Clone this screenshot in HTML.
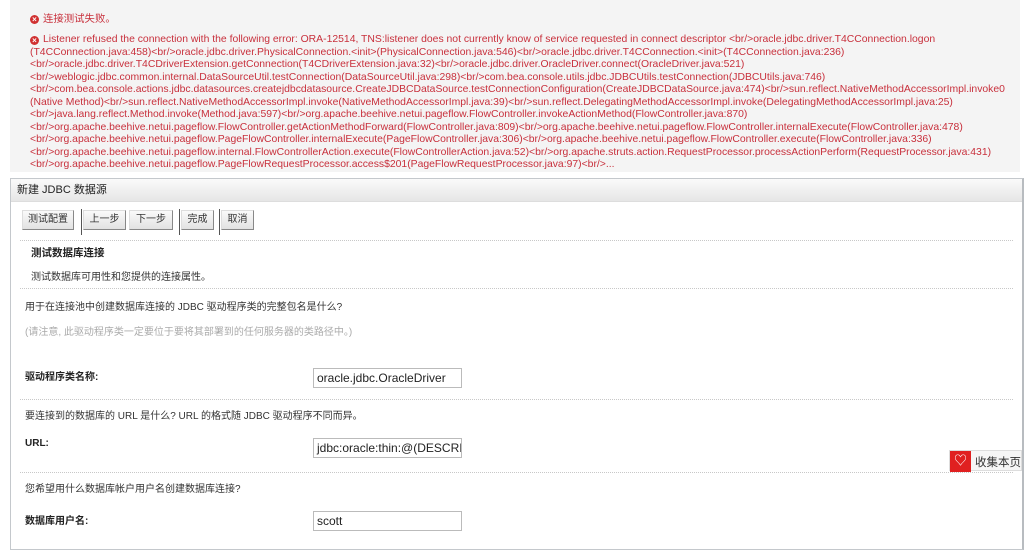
<!DOCTYPE html>
<html><head><meta charset="utf-8"><style>
body{margin:0;width:1024px;height:538px;background:#fff;position:relative;overflow:hidden;font-family:"Liberation Sans","Noto Sans CJK SC",sans-serif;}
.err{position:absolute;left:10px;top:0;width:1010px;height:172px;background:#f4f4f4;}
.e{position:absolute;left:30px;color:#c8303c;font-size:10.4px;white-space:nowrap;line-height:12px;}
.ic{position:absolute;left:30px;width:9px;height:9px;border-radius:50%;background:#d03030;color:#fff;font-size:8px;line-height:9px;text-align:center;font-weight:bold;}
.panel{position:absolute;left:10px;top:178px;width:1011px;height:370px;border:1px solid #c4c8cc;border-right:2px solid #b8bcc0;background:#fff;}
.hd{height:22px;background:linear-gradient(#fafafa,#e6e6e6);border-bottom:1px solid #ddd;font-size:11px;color:#222;line-height:22px;padding-left:6px;}
.b{position:absolute;top:210px;height:18px;border:1px solid #999;border-color:#ddd #888 #888 #ddd;background:linear-gradient(#fafafa,#e2e2e2);font-size:10px;line-height:18px;text-align:center;color:#333;}
.vl{position:absolute;top:209px;width:1px;height:26px;background:#555;}
.d{position:absolute;left:20px;width:993px;border-top:1px dotted #c8c8c8;}
.t{position:absolute;font-size:10px;color:#333;white-space:nowrap;}
.bold{font-weight:bold;color:#222;}
.in{position:absolute;left:313px;width:144px;height:18px;border:1px solid #bbb;font-size:12px;line-height:18px;padding-left:3px;color:#222;overflow:hidden;white-space:nowrap;box-sizing:content-box;}
</style></head><body>
<div class="err"></div>
<div class="ic" style="top:15px">×</div>
<div class="e" style="left:43px;top:14px">连接测试失败。</div>
<div class="ic" style="top:36px">×</div>
<div class="e" style="left:43px;top:34px">Listener refused the connection with the following error: ORA-12514, TNS:listener does not currently know of service requested in connect descriptor &lt;br/&gt;oracle.jdbc.driver.T4CConnection.logon</div>
<div class="e" style="top:47px">(T4CConnection.java:458)&lt;br/&gt;oracle.jdbc.driver.PhysicalConnection.&lt;init&gt;(PhysicalConnection.java:546)&lt;br/&gt;oracle.jdbc.driver.T4CConnection.&lt;init&gt;(T4CConnection.java:236)</div>
<div class="e" style="top:59px">&lt;br/&gt;oracle.jdbc.driver.T4CDriverExtension.getConnection(T4CDriverExtension.java:32)&lt;br/&gt;oracle.jdbc.driver.OracleDriver.connect(OracleDriver.java:521)</div>
<div class="e" style="top:72px">&lt;br/&gt;weblogic.jdbc.common.internal.DataSourceUtil.testConnection(DataSourceUtil.java:298)&lt;br/&gt;com.bea.console.utils.jdbc.JDBCUtils.testConnection(JDBCUtils.java:746)</div>
<div class="e" style="top:84px">&lt;br/&gt;com.bea.console.actions.jdbc.datasources.createjdbcdatasource.CreateJDBCDataSource.testConnectionConfiguration(CreateJDBCDataSource.java:474)&lt;br/&gt;sun.reflect.NativeMethodAccessorImpl.invoke0</div>
<div class="e" style="top:97px">(Native Method)&lt;br/&gt;sun.reflect.NativeMethodAccessorImpl.invoke(NativeMethodAccessorImpl.java:39)&lt;br/&gt;sun.reflect.DelegatingMethodAccessorImpl.invoke(DelegatingMethodAccessorImpl.java:25)</div>
<div class="e" style="top:109px">&lt;br/&gt;java.lang.reflect.Method.invoke(Method.java:597)&lt;br/&gt;org.apache.beehive.netui.pageflow.FlowController.invokeActionMethod(FlowController.java:870)</div>
<div class="e" style="top:122px">&lt;br/&gt;org.apache.beehive.netui.pageflow.FlowController.getActionMethodForward(FlowController.java:809)&lt;br/&gt;org.apache.beehive.netui.pageflow.FlowController.internalExecute(FlowController.java:478)</div>
<div class="e" style="top:134px">&lt;br/&gt;org.apache.beehive.netui.pageflow.PageFlowController.internalExecute(PageFlowController.java:306)&lt;br/&gt;org.apache.beehive.netui.pageflow.FlowController.execute(FlowController.java:336)</div>
<div class="e" style="top:147px">&lt;br/&gt;org.apache.beehive.netui.pageflow.internal.FlowControllerAction.execute(FlowControllerAction.java:52)&lt;br/&gt;org.apache.struts.action.RequestProcessor.processActionPerform(RequestProcessor.java:431)</div>
<div class="e" style="top:159px">&lt;br/&gt;org.apache.beehive.netui.pageflow.PageFlowRequestProcessor.access$201(PageFlowRequestProcessor.java:97)&lt;br/&gt;...</div>

<div class="panel"><div class="hd">新建 JDBC 数据源</div></div>
<div class="b" style="left:22px;width:50px">测试配置</div>
<div class="vl" style="left:81px"></div>
<div class="b" style="left:83px;width:41px">上一步</div>
<div class="b" style="left:129px;width:42px">下一步</div>
<div class="vl" style="left:179px"></div>
<div class="b" style="left:181px;width:31px">完成</div>
<div class="vl" style="left:219px"></div>
<div class="b" style="left:221px;width:31px">取消</div>
<div class="d" style="top:240px"></div>
<div class="t bold" style="left:31px;top:245px;font-size:10.5px">测试数据库连接</div>
<div class="t" style="left:31px;top:268px">测试数据库可用性和您提供的连接属性。</div>
<div class="d" style="top:288px"></div>
<div class="t" style="left:25px;top:298px">用于在连接池中创建数据库连接的 JDBC 驱动程序类的完整包名是什么?</div>
<div class="t" style="left:25px;top:323px;color:#aaa">(请注意, 此驱动程序类一定要位于要将其部署到的任何服务器的类路径中。)</div>
<div class="t bold" style="left:25px;top:368px">驱动程序类名称:</div>
<div class="in" style="top:368px">oracle.jdbc.OracleDriver</div>
<div class="d" style="top:399px"></div>
<div class="t" style="left:25px;top:407px">要连接到的数据库的 URL 是什么? URL 的格式随 JDBC 驱动程序不同而异。</div>
<div class="t bold" style="left:25px;top:438px">URL:</div>
<div class="in" style="top:438px">jdbc:oracle:thin:@(DESCRIPTION</div>
<div class="d" style="top:472px"></div>
<div class="t" style="left:25px;top:480px">您希望用什么数据库帐户用户名创建数据库连接?</div>
<div class="t bold" style="left:25px;top:512px">数据库用户名:</div>
<div class="in" style="top:511px">scott</div>
<div style="position:absolute;left:949px;top:450px;width:73px;height:21px;background:#f6f6f6;border:1px solid #ddd;box-sizing:border-box">
<div style="position:absolute;left:0;top:0;width:21px;height:21px;background:#e02020;color:#fff;font-size:13px;line-height:20px;text-align:center">♡</div>
<div style="position:absolute;left:25px;top:3px;font-size:11.5px;color:#333">收集本页</div></div>
</body></html>
